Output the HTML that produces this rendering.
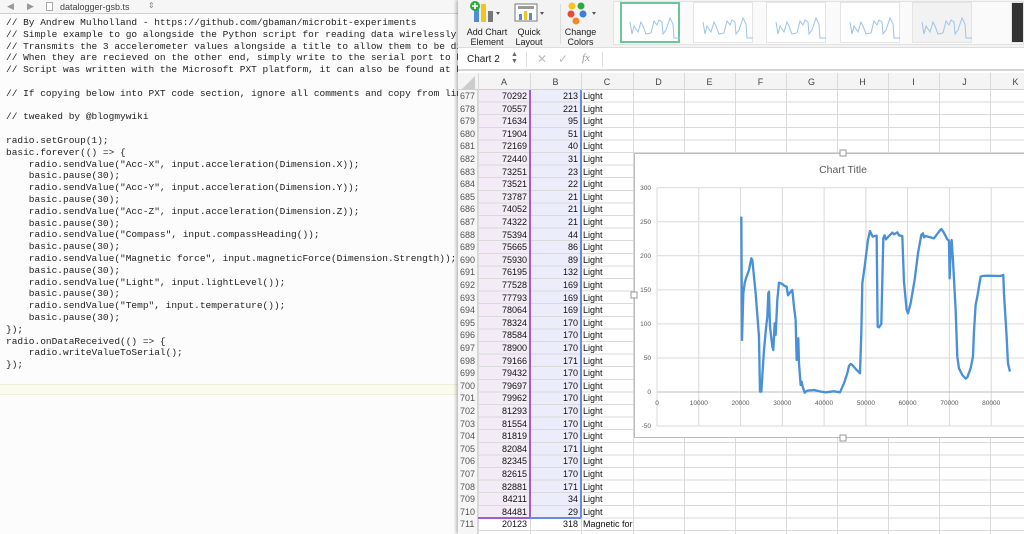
<!DOCTYPE html>
<html><head><meta charset="utf-8"><style>
*{margin:0;padding:0;box-sizing:border-box}
body{width:1024px;height:534px;overflow:hidden;background:#fff;position:relative;font-family:"Liberation Sans",sans-serif}
.abs{position:absolute}
#ed{left:0;top:0;width:460px;height:534px;background:#fcfcfc}
#tab{left:0;top:0;width:460px;height:14px;background:#f6f6f6;border-bottom:1px solid #d0d0d0;font-size:9px;color:#444}
pre{position:absolute;left:6px;top:17px;font-family:"Liberation Mono",monospace;font-size:9.5px;line-height:11.8px;color:#222}
#xl{left:458px;top:0;width:566px;height:534px;background:#fff;box-shadow:-2px 0 3px rgba(0,0,0,.25)}
#rib{left:458px;top:0;width:566px;height:48px;background:#f3f3f3;border-bottom:1px solid #ddd}
.rl{font-size:9px;color:#222;text-align:center;line-height:10px}
.th{top:2px;height:41px;width:60px;background:#fff;border:1px solid #e4e4e4}
#fb{left:458px;top:49px;width:566px;height:22px;background:#fff;border-bottom:2px solid #d6d6d6}
#hdr{left:458px;top:73px;width:566px;height:17px;background:#f4f4f4;border-bottom:1px solid #cfcfcf;font-size:9px;color:#444}
#hdr span{position:absolute;top:4px;text-align:center}
.grid{left:458px;top:90px;width:566px;height:444px;background:repeating-linear-gradient(to bottom,transparent 0,transparent 11.6px,#dadada 11.6px,#dadada 12.6px)}
.vl{top:73px;width:1px;height:461px;background:#dadada}
.r{position:absolute;left:458px;width:566px;height:12.6px;font-size:9px;line-height:12.6px;color:#111}
.r b{font-weight:normal;position:absolute;left:2px;color:#555}
.r i{font-style:normal;position:absolute;text-align:right}
.r .a{right:497px}.r .b{right:446px}.r .c{left:125px}
</style></head><body>
<div id="ed" class="abs"></div>
<div id="tab" class="abs"><span class="abs" style="left:7px;top:1px;color:#999">◀</span><span class="abs" style="left:27px;top:1px;color:#999">▶</span><span class="abs" style="left:46px;top:2px;width:7px;height:9px;border:1px solid #aaa;background:#fff"></span><span class="abs" style="left:60px;top:2px">datalogger-gsb.ts</span><span class="abs" style="left:148px;top:1px;color:#888;font-size:8px">⇕</span></div>
<div class="abs" style="left:0;top:384px;width:460px;height:11px;background:#fbfbee;border-top:1px solid #eeeedd;border-bottom:1px solid #eeeedd"></div>
<pre>// By Andrew Mulholland - https://github.com/gbaman/microbit-experiments
// Simple example to go alongside the Python script for reading data wirelessly 
// Transmits the 3 accelerometer values alongside a title to allow them to be di
// When they are recieved on the other end, simply write to the serial port to b
// Script was written with the Microsoft PXT platform, it can also be found at h

// If copying below into PXT code section, ignore all comments and copy from lin

// tweaked by @blogmywiki

radio.setGroup(1);
basic.forever(() =&gt; {
    radio.sendValue("Acc-X", input.acceleration(Dimension.X));
    basic.pause(30);
    radio.sendValue("Acc-Y", input.acceleration(Dimension.Y));
    basic.pause(30);
    radio.sendValue("Acc-Z", input.acceleration(Dimension.Z));
    basic.pause(30);
    radio.sendValue("Compass", input.compassHeading());
    basic.pause(30);
    radio.sendValue("Magnetic force", input.magneticForce(Dimension.Strength));
    basic.pause(30);
    radio.sendValue("Light", input.lightLevel());
    basic.pause(30);
    radio.sendValue("Temp", input.temperature());
    basic.pause(30);
});
radio.onDataReceived(() =&gt; {
    radio.writeValueToSerial();
});</pre>
<div id="xl" class="abs"></div>
<div id="rib" class="abs">
 <svg class="abs" style="left:12px;top:1px" width="32" height="22"><rect x="4" y="6" width="5" height="15" fill="#4a8fd8"/><rect x="11" y="3" width="5" height="18" fill="#f4c31e"/><rect x="18" y="10" width="5" height="11" fill="#777"/><circle cx="5" cy="5" r="5" fill="#2faa3f"/><path d="M5 2v6M2 5h6" stroke="#fff" stroke-width="1.6"/><path d="M26 11l4 0-2 3z" fill="#555"/></svg>
 <div class="abs rl" style="left:4px;top:27px;width:50px">Add Chart<br>Element</div>
 <svg class="abs" style="left:56px;top:3px" width="32" height="20"><rect x="1" y="1" width="22" height="17" fill="#fff" stroke="#777"/><rect x="4" y="3" width="16" height="3" fill="#999"/><rect x="5" y="11" width="3" height="6" fill="#4a8fd8"/><rect x="10" y="8" width="3" height="9" fill="#f4c31e"/><rect x="15" y="10" width="3" height="7" fill="#4a8fd8"/><path d="M26 9l4 0-2 3z" fill="#555"/></svg>
 <div class="abs rl" style="left:50px;top:27px;width:42px">Quick<br>Layout</div>
 <div class="abs" style="left:102px;top:4px;height:40px;width:1px;background:#ddd"></div>
 <svg class="abs" style="left:106px;top:1px" width="34" height="24"><circle cx="8" cy="5" r="3.5" fill="#f4c31e"/><circle cx="17" cy="5" r="3.5" fill="#2faa3f"/><circle cx="7" cy="13" r="3.5" fill="#e34a3a"/><circle cx="19" cy="13" r="3.5" fill="#3b7fd8"/><circle cx="12" cy="20" r="3.5" fill="#f08a24"/><path d="M28 11l4 0-2 3z" fill="#555"/></svg>
 <div class="abs rl" style="left:100px;top:27px;width:45px">Change<br>Colors</div>
 <div class="abs" style="left:155px;top:1px;width:411px;height:44px;background:#fafafa;border:1px solid #e2e2e2"></div>
 <div class="abs th" style="left:162px;border:2px solid #6cc49a"></div>
 <div class="abs th" style="left:235px"></div>
 <div class="abs th" style="left:308px"></div>
 <div class="abs th" style="left:382px"></div>
 <div class="abs th" style="left:454px;background:#f2f2f2"></div>
 <div class="abs th" style="left:553px;width:13px;background:#333"></div>
 <svg class="abs" style="left:160px;top:4px" width="360" height="38"><g fill="none" stroke="#9cc3ea" stroke-width="1"><path d="M12 18l2 12 2-8 4 6 3-10 2 4 3 8 5-1 3-12 3 4 2-5 3 2 1 12 3-4 4 -12 3 6 1 14h6"/><path d="M85 18l2 12 2-8 4 6 3-10 2 4 3 8 5-1 3-12 3 4 2-5 3 2 1 12 3-4 4 -12 3 6 1 14h6"/><path d="M158 18l2 12 2-8 4 6 3-10 2 4 3 8 5-1 3-12 3 4 2-5 3 2 1 12 3-4 4 -12 3 6 1 14h6"/><path d="M232 18l2 12 2-8 4 6 3-10 2 4 3 8 5-1 3-12 3 4 2-5 3 2 1 12 3-4 4 -12 3 6 1 14h6"/><path d="M304 18l2 12 2-8 4 6 3-10 2 4 3 8 5-1 3-12 3 4 2-5 3 2 1 12 3-4 4 -12 3 6 1 14h6"/></g></svg>
</div>
<div id="fb" class="abs"><span class="abs" style="left:9px;top:5px;font-size:10px;color:#222">Chart 2</span><span class="abs" style="left:53px;top:2px;font-size:7px;color:#666;line-height:7px">▲<br>▼</span><div class="abs" style="left:68px;top:3px;width:1px;height:15px;background:#ddd"></div><span class="abs" style="left:79px;top:3px;font-size:12px;color:#bbb">✕</span><span class="abs" style="left:100px;top:3px;font-size:12px;color:#bbb">✓</span><span class="abs" style="left:124px;top:3px;font-size:11px;color:#999;font-family:'Liberation Serif',serif;font-style:italic">fx</span><div class="abs" style="left:144px;top:3px;width:1px;height:15px;background:#ddd"></div></div>
<div id="hdr" class="abs"><svg class="abs" style="left:4px;top:3px" width="14" height="13"><path d="M13 0v13H0z" fill="#ccc"/></svg><span style="left:20px;width:52px">A</span><span style="left:72px;width:51px">B</span><span style="left:123px;width:52px">C</span><span style="left:175px;width:51px">D</span><span style="left:226px;width:51px">E</span><span style="left:277px;width:51px">F</span><span style="left:328px;width:51px">G</span><span style="left:379px;width:51px">H</span><span style="left:430px;width:51px">I</span><span style="left:481px;width:51px">J</span><span style="left:532px;width:51px">K</span></div>
<div class="abs" style="left:478px;top:90px;width:52px;height:428px;background:#f3ebf6"></div>
<div class="abs" style="left:530px;top:90px;width:51px;height:428px;background:#ebedfa"></div>
<div class="abs grid"></div>
<div class="abs vl" style="left:478px"></div><div class="abs vl" style="left:530px"></div><div class="abs vl" style="left:581px"></div><div class="abs vl" style="left:633px"></div><div class="abs vl" style="left:684px"></div><div class="abs vl" style="left:735px"></div><div class="abs vl" style="left:786px"></div><div class="abs vl" style="left:837px"></div><div class="abs vl" style="left:888px"></div><div class="abs vl" style="left:939px"></div><div class="abs vl" style="left:990px"></div>
<div class="abs" style="left:529px;top:90px;width:2px;height:428px;background:#a25bd0"></div>
<div class="abs" style="left:580px;top:90px;width:2px;height:428px;background:#6a8ae6"></div>
<div class="abs" style="left:478px;top:517px;width:52px;height:2px;background:#a25bd0"></div>
<div class="abs" style="left:530px;top:517px;width:51px;height:2px;background:#6a8ae6"></div>
<div class="abs" style="left:458px;top:90px;width:20px;height:444px;background:#f6f6f6;border-right:1px solid #d6d6d6"></div>
<div id="rows">
<div class="r" style="top:90.0px"><b>677</b><i class="a">70292</i><i class="b">213</i><i class="c">Light</i></div>
<div class="r" style="top:102.6px"><b>678</b><i class="a">70557</i><i class="b">221</i><i class="c">Light</i></div>
<div class="r" style="top:115.2px"><b>679</b><i class="a">71634</i><i class="b">95</i><i class="c">Light</i></div>
<div class="r" style="top:127.8px"><b>680</b><i class="a">71904</i><i class="b">51</i><i class="c">Light</i></div>
<div class="r" style="top:140.4px"><b>681</b><i class="a">72169</i><i class="b">40</i><i class="c">Light</i></div>
<div class="r" style="top:153.0px"><b>682</b><i class="a">72440</i><i class="b">31</i><i class="c">Light</i></div>
<div class="r" style="top:165.6px"><b>683</b><i class="a">73251</i><i class="b">23</i><i class="c">Light</i></div>
<div class="r" style="top:178.2px"><b>684</b><i class="a">73521</i><i class="b">22</i><i class="c">Light</i></div>
<div class="r" style="top:190.8px"><b>685</b><i class="a">73787</i><i class="b">21</i><i class="c">Light</i></div>
<div class="r" style="top:203.4px"><b>686</b><i class="a">74052</i><i class="b">21</i><i class="c">Light</i></div>
<div class="r" style="top:216.0px"><b>687</b><i class="a">74322</i><i class="b">21</i><i class="c">Light</i></div>
<div class="r" style="top:228.6px"><b>688</b><i class="a">75394</i><i class="b">44</i><i class="c">Light</i></div>
<div class="r" style="top:241.2px"><b>689</b><i class="a">75665</i><i class="b">86</i><i class="c">Light</i></div>
<div class="r" style="top:253.8px"><b>690</b><i class="a">75930</i><i class="b">89</i><i class="c">Light</i></div>
<div class="r" style="top:266.4px"><b>691</b><i class="a">76195</i><i class="b">132</i><i class="c">Light</i></div>
<div class="r" style="top:279.0px"><b>692</b><i class="a">77528</i><i class="b">169</i><i class="c">Light</i></div>
<div class="r" style="top:291.6px"><b>693</b><i class="a">77793</i><i class="b">169</i><i class="c">Light</i></div>
<div class="r" style="top:304.2px"><b>694</b><i class="a">78064</i><i class="b">169</i><i class="c">Light</i></div>
<div class="r" style="top:316.8px"><b>695</b><i class="a">78324</i><i class="b">170</i><i class="c">Light</i></div>
<div class="r" style="top:329.4px"><b>696</b><i class="a">78584</i><i class="b">170</i><i class="c">Light</i></div>
<div class="r" style="top:342.0px"><b>697</b><i class="a">78900</i><i class="b">170</i><i class="c">Light</i></div>
<div class="r" style="top:354.6px"><b>698</b><i class="a">79166</i><i class="b">171</i><i class="c">Light</i></div>
<div class="r" style="top:367.2px"><b>699</b><i class="a">79432</i><i class="b">170</i><i class="c">Light</i></div>
<div class="r" style="top:379.8px"><b>700</b><i class="a">79697</i><i class="b">170</i><i class="c">Light</i></div>
<div class="r" style="top:392.4px"><b>701</b><i class="a">79962</i><i class="b">170</i><i class="c">Light</i></div>
<div class="r" style="top:405.0px"><b>702</b><i class="a">81293</i><i class="b">170</i><i class="c">Light</i></div>
<div class="r" style="top:417.6px"><b>703</b><i class="a">81554</i><i class="b">170</i><i class="c">Light</i></div>
<div class="r" style="top:430.2px"><b>704</b><i class="a">81819</i><i class="b">170</i><i class="c">Light</i></div>
<div class="r" style="top:442.8px"><b>705</b><i class="a">82084</i><i class="b">171</i><i class="c">Light</i></div>
<div class="r" style="top:455.4px"><b>706</b><i class="a">82345</i><i class="b">170</i><i class="c">Light</i></div>
<div class="r" style="top:468.0px"><b>707</b><i class="a">82615</i><i class="b">170</i><i class="c">Light</i></div>
<div class="r" style="top:480.6px"><b>708</b><i class="a">82881</i><i class="b">171</i><i class="c">Light</i></div>
<div class="r" style="top:493.2px"><b>709</b><i class="a">84211</i><i class="b">34</i><i class="c">Light</i></div>
<div class="r" style="top:505.8px"><b>710</b><i class="a">84481</i><i class="b">29</i><i class="c">Light</i></div>
<div class="r" style="top:518.4px"><b>711</b><i class="a">20123</i><i class="b">318</i><i class="c">Magnetic for</i></div>
</div>
<svg class="abs" style="left:0;top:0" width="1024" height="534">
<rect x="634.5" y="153.5" width="395" height="284" fill="#fff" stroke="#bcbcbc"/>
<g fill="#fff" stroke="#999"><rect x="840" y="150" width="6" height="6"/><rect x="840" y="435" width="6" height="6"/><rect x="631" y="292" width="6" height="6"/></g>
<text x="843" y="173" font-size="10.5" fill="#595959" text-anchor="middle" font-family="Liberation Sans">Chart Title</text>
<g stroke="#d9d9d9" stroke-width="1">
<path d="M657 187.7H1024M657 221.8H1024M657 255.8H1024M657 289.9H1024M657 323.9H1024M657 358H1024M657 426H1024"/>
<path d="M657 187.7V426M698.8 187.7V426M740.5 187.7V426M782.3 187.7V426M824.1 187.7V426M865.9 187.7V426M907.6 187.7V426M949.4 187.7V426M991.2 187.7V426"/>
</g>
<path d="M657 392H1024" stroke="#bfbfbf"/>
<g font-size="6.5" fill="#595959" font-family="Liberation Sans" text-anchor="end">
<text x="651" y="190">300</text><text x="651" y="224">250</text><text x="651" y="258">200</text><text x="651" y="292">150</text><text x="651" y="326">100</text><text x="651" y="360">50</text><text x="651" y="394">0</text><text x="651" y="428">-50</text>
</g>
<g font-size="6.5" fill="#595959" font-family="Liberation Sans" text-anchor="middle">
<text x="657" y="405">0</text><text x="698.8" y="405">10000</text><text x="740.5" y="405">20000</text><text x="782.3" y="405">30000</text><text x="824.1" y="405">40000</text><text x="865.9" y="405">50000</text><text x="907.6" y="405">60000</text><text x="949.4" y="405">70000</text><text x="991.2" y="405">80000</text>
</g>
<g transform="translate(634,150) scale(0.3333)">
<path fill="none" stroke="#4a90d9" stroke-width="7" stroke-linejoin="round" d="M322 200L324 570 328 430 332 400 336 385 345 360 352 325 355 330 365 430 375 560 378 725 382 725 390 600 396 535 400 500 403 430 405 425 408 530 415 590 418 600 422 520 425 555 430 450 435 398 445 402 452 408 458 410 462 436 470 425 475 420 480 470 485 510 488 630 490 570 493 565 495 640 500 705 503 695 506 710 512 728 520 722 540 720 560 725 575 727 600 724 618 727 630 700 640 670 645 648 650 642 655 645 668 660 678 670 682 550 685 400 692 350 702 270 708 243 716 260 722 258 728 257 731 530 735 532 742 522 748 265 752 256 756 268 765 258 775 248 780 253 790 247 795 256 805 258 810 395 818 480 822 490 830 460 842 390 852 310 862 255 867 250 870 262 875 258 900 265 915 245 922 237 928 245 940 268 945 272 947 385 950 300 953 270 957 330 965 480 970 620 975 655 985 675 995 686 1000 682 1010 655 1017 620 1020 545 1025 465 1030 440 1040 380 1045 378 1060 377 1100 378 1108 375 1110 430 1118 560 1122 640 1128 665"/>
</g>
</svg>
</body></html>
